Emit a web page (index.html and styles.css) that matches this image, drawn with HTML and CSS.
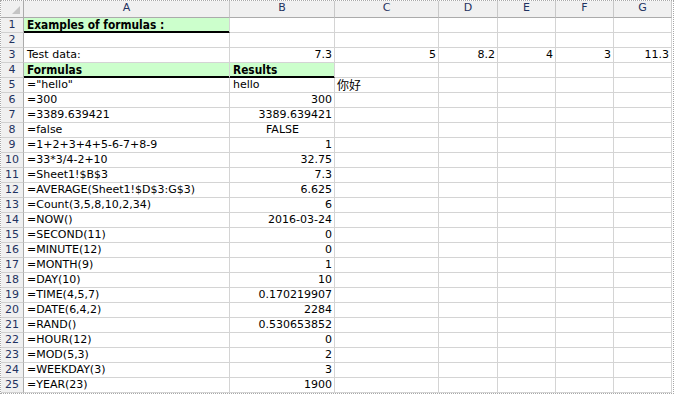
FILE: index.html
```html
<!DOCTYPE html>
<html>
<head>
<meta charset="utf-8">
<link rel="stylesheet" href="styles.css">
<title>Formulas</title>
</head>
<body>
<div class="sheet">
  <div class="grid">
    <div class="corner"><span class="tri"></span></div>
    <div class="ch">A</div><div class="ch">B</div><div class="ch">C</div><div class="ch">D</div><div class="ch">E</div><div class="ch">F</div><div class="ch">G</div>

    <div class="rh">1</div><div class="c title">Examples of formulas :</div><div class="c"></div><div class="c"></div><div class="c"></div><div class="c"></div><div class="c"></div><div class="c"></div>
    <div class="rh">2</div><div class="c"></div><div class="c"></div><div class="c"></div><div class="c"></div><div class="c"></div><div class="c"></div><div class="c"></div>
    <div class="rh">3</div><div class="c">Test data:</div><div class="c n">7.3</div><div class="c n">5</div><div class="c n">8.2</div><div class="c n">4</div><div class="c n">3</div><div class="c n">11.3</div>
    <div class="rh">4</div><div class="c title">Formulas</div><div class="c title">Results</div><div class="c"></div><div class="c"></div><div class="c"></div><div class="c"></div><div class="c"></div>
    <div class="rh">5</div><div class="c">="hello"</div><div class="c">hello</div><div class="c cjk">你好</div><div class="c"></div><div class="c"></div><div class="c"></div><div class="c"></div>
    <div class="rh">6</div><div class="c">=300</div><div class="c n">300</div><div class="c"></div><div class="c"></div><div class="c"></div><div class="c"></div><div class="c"></div>
    <div class="rh">7</div><div class="c">=3389.639421</div><div class="c n">3389.639421</div><div class="c"></div><div class="c"></div><div class="c"></div><div class="c"></div><div class="c"></div>
    <div class="rh">8</div><div class="c">=false</div><div class="c b">FALSE</div><div class="c"></div><div class="c"></div><div class="c"></div><div class="c"></div><div class="c"></div>
    <div class="rh">9</div><div class="c">=1+2+3+4+5-6-7+8-9</div><div class="c n">1</div><div class="c"></div><div class="c"></div><div class="c"></div><div class="c"></div><div class="c"></div>
    <div class="rh">10</div><div class="c">=33*3/4-2+10</div><div class="c n">32.75</div><div class="c"></div><div class="c"></div><div class="c"></div><div class="c"></div><div class="c"></div>
    <div class="rh">11</div><div class="c">=Sheet1!$B$3</div><div class="c n">7.3</div><div class="c"></div><div class="c"></div><div class="c"></div><div class="c"></div><div class="c"></div>
    <div class="rh">12</div><div class="c">=AVERAGE(Sheet1!$D$3:G$3)</div><div class="c n">6.625</div><div class="c"></div><div class="c"></div><div class="c"></div><div class="c"></div><div class="c"></div>
    <div class="rh">13</div><div class="c">=Count(3,5,8,10,2,34)</div><div class="c n">6</div><div class="c"></div><div class="c"></div><div class="c"></div><div class="c"></div><div class="c"></div>
    <div class="rh">14</div><div class="c">=NOW()</div><div class="c n">2016-03-24</div><div class="c"></div><div class="c"></div><div class="c"></div><div class="c"></div><div class="c"></div>
    <div class="rh">15</div><div class="c">=SECOND(11)</div><div class="c n">0</div><div class="c"></div><div class="c"></div><div class="c"></div><div class="c"></div><div class="c"></div>
    <div class="rh">16</div><div class="c">=MINUTE(12)</div><div class="c n">0</div><div class="c"></div><div class="c"></div><div class="c"></div><div class="c"></div><div class="c"></div>
    <div class="rh">17</div><div class="c">=MONTH(9)</div><div class="c n">1</div><div class="c"></div><div class="c"></div><div class="c"></div><div class="c"></div><div class="c"></div>
    <div class="rh">18</div><div class="c">=DAY(10)</div><div class="c n">10</div><div class="c"></div><div class="c"></div><div class="c"></div><div class="c"></div><div class="c"></div>
    <div class="rh">19</div><div class="c">=TIME(4,5,7)</div><div class="c n">0.170219907</div><div class="c"></div><div class="c"></div><div class="c"></div><div class="c"></div><div class="c"></div>
    <div class="rh">20</div><div class="c">=DATE(6,4,2)</div><div class="c n">2284</div><div class="c"></div><div class="c"></div><div class="c"></div><div class="c"></div><div class="c"></div>
    <div class="rh">21</div><div class="c">=RAND()</div><div class="c n">0.530653852</div><div class="c"></div><div class="c"></div><div class="c"></div><div class="c"></div><div class="c"></div>
    <div class="rh">22</div><div class="c">=HOUR(12)</div><div class="c n">0</div><div class="c"></div><div class="c"></div><div class="c"></div><div class="c"></div><div class="c"></div>
    <div class="rh">23</div><div class="c">=MOD(5,3)</div><div class="c n">2</div><div class="c"></div><div class="c"></div><div class="c"></div><div class="c"></div><div class="c"></div>
    <div class="rh">24</div><div class="c">=WEEKDAY(3)</div><div class="c n">3</div><div class="c"></div><div class="c"></div><div class="c"></div><div class="c"></div><div class="c"></div>
    <div class="rh">25</div><div class="c">=YEAR(23)</div><div class="c n">1900</div><div class="c"></div><div class="c"></div><div class="c"></div><div class="c"></div><div class="c"></div>
  </div>
</div>
</body>
</html>
```

FILE: styles.css
```css
html, body {
  margin: 0;
  padding: 0;
  background: #ffffff;
}

.sheet {
  box-sizing: border-box;
  width: 674px;
  height: 394px;
  border: 1px dotted #a8a8a8;
  overflow: hidden;
  font-family: "DejaVu Sans", sans-serif;
  font-size: 11px;
  color: #000;
}

.grid {
  display: grid;
  grid-template-columns: 23px 206px 105px 104px 59px 58px 58px 58px;
  grid-template-rows: 17px repeat(25, 15px);
}

.grid > div {
  box-sizing: border-box;
  border-right: 1px solid #d4d4d4;
  border-bottom: 1px solid #d4d4d4;
  white-space: nowrap;
  overflow: visible;
  line-height: 14px;
}

/* column headers */
.corner,
.ch {
  background: #f0f0f0;
}
.grid > .corner,
.grid > .ch {
  border-bottom-color: #ababab;
  border-right-color: #c8c8c8;
}
.grid > .corner {
  border-right-color: #ababab;
  position: relative;
}
.tri {
  position: absolute;
  right: 3px;
  bottom: 3px;
  width: 0;
  height: 0;
  border-left: 8px solid transparent;
  border-bottom: 8px solid #c4c4c4;
}
.ch {
  text-align: center;
  line-height: 16px;
  color: #1f3260;
}

/* row headers */
.grid > .rh {
  background: #f0f0f0;
  border-right-color: #ababab;
  border-bottom-color: #d0d0d0;
  text-align: center;
  color: #1f3260;
}

/* cells */
.c {
  padding: 0 2px 0 3px;
}
.n {
  text-align: right;
}
.b {
  text-align: center;
}
.cjk {
  font-family: "Noto Sans CJK SC", sans-serif;
  font-size: 12px;
  padding-left: 2px;
}
.grid > .title {
  background: #ccffcc;
  font-family: "DejaVu Sans Condensed", "DejaVu Sans", sans-serif;
  font-size: 11.8px;
  font-weight: bold;
  border-bottom-color: #000;
  box-shadow: inset 0 -1px 0 #000;
}
```
